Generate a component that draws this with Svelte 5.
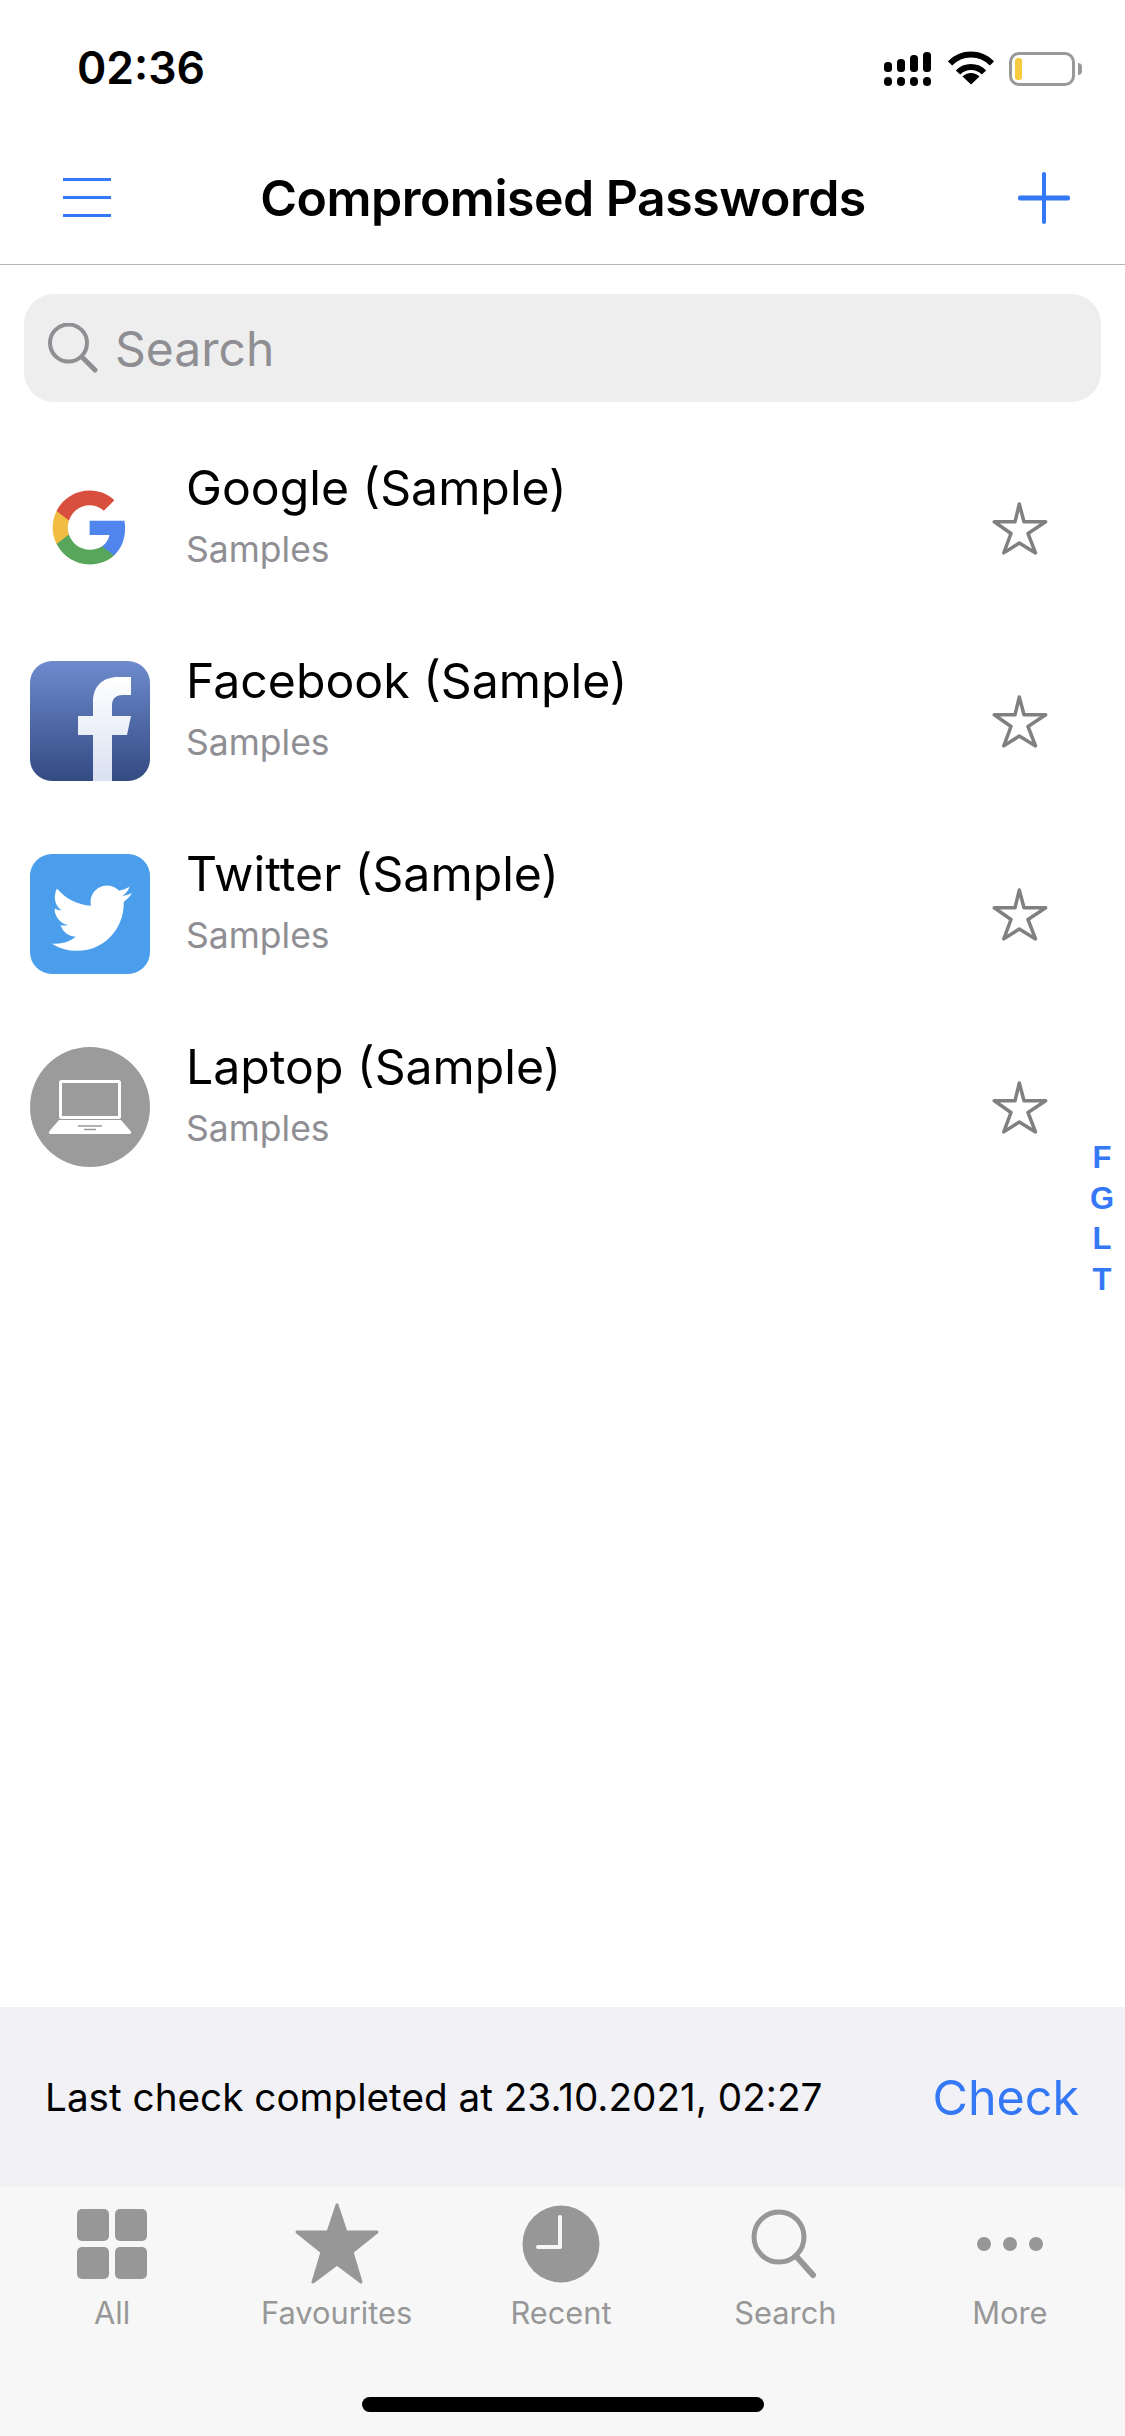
<script>
  const items = [
    { name: 'Google (Sample)', icon: 'google' },
    { name: 'Facebook (Sample)', icon: 'facebook' },
    { name: 'Twitter (Sample)', icon: 'twitter' },
    { name: 'Laptop (Sample)', icon: 'laptop' }
  ];
  const tabs = ['All', 'Favourites', 'Recent', 'Search', 'More'];
  const letters = ['F', 'G', 'L', 'T'];
</script>

<div class="page">
  <div class="status">
    <span class="time">02:36</span>
    <div class="status-icons">
      <svg class="signal" width="47" height="34" viewBox="0 0 47 34" fill="#000">
        <rect x="0" y="10" width="8" height="10" rx="3.5" />
        <rect x="13" y="7" width="8" height="13" rx="3.5" />
        <rect x="26" y="3" width="8" height="17" rx="3.5" />
        <rect x="39" y="0" width="8" height="20" rx="3.5" />
        <rect x="0" y="25" width="8" height="9" rx="4" />
        <rect x="13" y="25" width="8" height="9" rx="4" />
        <rect x="26" y="25" width="8" height="9" rx="4" />
        <rect x="39" y="25" width="8" height="9" rx="4" />
      </svg>
      <svg class="wifi" width="46" height="34" viewBox="0 0 46 34" fill="none" stroke="#000" stroke-width="6">
        <path d="M2 12.5 A29 29 0 0 1 44 12.5" />
        <path d="M10 21.5 A18 18 0 0 1 36 21.5" />
        <path d="M23 33.5 L14.5 25.5 A12 12 0 0 1 31.5 25.5 Z" fill="#000" stroke="none" />
      </svg>
      <div class="battery">
        <div class="battery-body"><div class="battery-fill"></div></div>
        <div class="battery-cap"></div>
      </div>
    </div>
  </div>

  <div class="nav">
    <svg class="menu" width="48" height="40" viewBox="0 0 48 40" fill="#3478f6">
      <rect x="0" y="0" width="48" height="3" />
      <rect x="0" y="18" width="48" height="3" />
      <rect x="0" y="36" width="48" height="3" />
    </svg>
    <span class="title">Compromised Passwords</span>
    <svg class="plus" width="52" height="52" viewBox="0 0 52 52" fill="#3478f6">
      <rect x="24" y="0" width="4" height="52" rx="2" />
      <rect x="0" y="23.5" width="52" height="5" rx="2" />
    </svg>
  </div>

  <div class="search-wrap">
    <div class="search">
      <svg width="50" height="50" viewBox="0 0 50 50" fill="none" stroke="#8e8e93" stroke-width="4" stroke-linecap="round">
        <circle cx="20.5" cy="20" r="18.5" />
        <path d="M34 34 L47 47" stroke-width="5" />
      </svg>
      <span>Search</span>
    </div>
  </div>

  <div class="list">
    {#each items as item}
      <div class="row">
        <div class="icon">
          {#if item.icon === 'google'}
            <svg width="120" height="120" viewBox="0 0 120 120">
              <g transform="translate(19.3 19.2) scale(1.68)">
                <path fill="#5085ed" d="M45.12 24.5c0-1.56-.14-3.06-.4-4.5H24v8.51h11.84c-.51 2.75-2.06 5.08-4.39 6.64v5.52h7.11c4.16-3.83 6.56-9.47 6.56-16.17z" />
                <path fill="#58a65c" d="M24 46c5.94 0 10.92-1.97 14.56-5.33l-7.11-5.52c-1.97 1.32-4.49 2.1-7.45 2.1-5.73 0-10.58-3.87-12.31-9.07H4.34v5.7C7.96 41.07 15.4 46 24 46z" />
                <path fill="#f1bc42" d="M11.69 28.18C11.25 26.86 11 25.45 11 24s.25-2.86.69-4.18v-5.7H4.34C2.85 17.09 2 20.45 2 24c0 3.55.85 6.91 2.34 9.88l7.35-5.7z" />
                <path fill="#d94f3d" d="M24 10.75c3.23 0 6.13 1.11 8.41 3.29l6.31-6.31C34.91 4.18 29.93 2 24 2 15.4 2 7.96 6.93 4.34 14.12l7.35 5.7c1.73-5.2 6.58-9.07 12.31-9.07z" />
              </g>
            </svg>
          {:else if item.icon === 'facebook'}
            <svg width="120" height="120" viewBox="0 0 120 120">
              <defs>
                <linearGradient id="fbBg" x1="0" y1="0" x2="0" y2="1">
                  <stop offset="0" stop-color="#6d8bcd" />
                  <stop offset="1" stop-color="#344a83" />
                </linearGradient>
                <linearGradient id="fbF" x1="0" y1="0" x2="0" y2="1">
                  <stop offset="0" stop-color="#ffffff" />
                  <stop offset="1" stop-color="#d9e0f1" />
                </linearGradient>
              </defs>
              <rect width="120" height="120" rx="22" fill="url(#fbBg)" />
              <path fill="url(#fbF)" d="M63 120V74H48V55H63V41C63 25 73 16 88 16H101V34H93C85 34 82 38 82 45V55H101L97 74H82V120Z" />
            </svg>
          {:else if item.icon === 'twitter'}
            <svg width="120" height="120" viewBox="0 0 120 120">
              <rect width="120" height="120" rx="22" fill="#4b9eec" />
              <path transform="translate(21.5 24) scale(3.35)" fill="#fff" d="M23.953 4.57a10 10 0 01-2.825.775 4.958 4.958 0 002.163-2.723c-.951.555-2.005.959-3.127 1.184a4.92 4.92 0 00-8.384 4.482C7.69 8.095 4.067 6.13 1.64 3.162a4.822 4.822 0 00-.666 2.475c0 1.71.87 3.213 2.188 4.096a4.904 4.904 0 01-2.228-.616v.06a4.923 4.923 0 003.946 4.827 4.996 4.996 0 01-2.212.085 4.936 4.936 0 004.604 3.417 9.867 9.867 0 01-6.102 2.105c-.39 0-.779-.023-1.17-.067a13.995 13.995 0 007.557 2.209c9.053 0 13.998-7.496 13.998-13.985 0-.21 0-.42-.015-.63A9.935 9.935 0 0024 4.59z" />
            </svg>
          {:else}
            <svg width="120" height="120" viewBox="0 0 120 120">
              <circle cx="60" cy="60" r="60" fill="#9b9b9b" />
              <rect x="30.5" y="34.5" width="59" height="36" rx="1" fill="none" stroke="#fff" stroke-width="3" />
              <path fill="#fff" d="M29 73H91L100.500 84C102 86 101 87 99 87H21C19 87 18 86 19.500 84Z" />
              <path stroke="#9b9b9b" stroke-width="1.500" d="M48 79H72M54 82.500H66" />
            </svg>
          {/if}
        </div>
        <div class="text">
          <div class="name">{item.name}</div>
          <div class="group">Samples</div>
        </div>
        <svg class="star" width="60" height="60" viewBox="0 0 60 60" fill="none" stroke="#808080" stroke-width="3.500" stroke-linejoin="round">
          <path d="M29.300 4L34 21.800H55.700L38 33.500L45.500 52.900L29.300 43L13.800 52.900L21 33.500L4.300 21.800H25Z" />
        </svg>
      </div>
    {/each}
  </div>

  <div class="index">
    {#each letters as letter}
      <span>{letter}</span>
    {/each}
  </div>

  <div class="check-bar">
    <span class="check-text">Last check completed at 23.10.2021, 02:27</span>
    <span class="check-btn">Check</span>
  </div>

  <div class="tabbar">
    <div class="tabs">
      {#each tabs as tab}
        <div class="tab">
          <div class="tab-icon">
            {#if tab === 'All'}
              <svg width="70" height="70" viewBox="0 0 70 70" fill="#979797">
                <rect x="0" y="0" width="32" height="32" rx="5" />
                <rect x="38" y="0" width="32" height="32" rx="5" />
                <rect x="0" y="38" width="32" height="32" rx="5" />
                <rect x="38" y="38" width="32" height="32" rx="5" />
              </svg>
            {:else if tab === 'Favourites'}
              <svg width="86" height="82" viewBox="0 0 86 82" fill="#979797" stroke="#979797" stroke-width="3" stroke-linejoin="round">
                <path d="M43 2L52 29H83L58 49L67 79L43 61L19 79L28 49L3 29H34Z" />
              </svg>
            {:else if tab === 'Recent'}
              <svg width="78" height="78" viewBox="0 0 78 78">
                <circle cx="39" cy="39" r="38.500" fill="#979797" />
                <path d="M38 12V42H16" fill="none" stroke="#f7f7f7" stroke-width="4" stroke-linecap="round" stroke-linejoin="round" />
              </svg>
            {:else if tab === 'Search'}
              <svg width="68" height="70" viewBox="0 0 68 70" fill="none" stroke="#979797" stroke-width="5" stroke-linecap="round">
                <circle cx="28" cy="28" r="25" />
                <path d="M45 47L62 66" stroke-width="6" />
              </svg>
            {:else}
              <svg width="66" height="16" viewBox="0 0 66 16" fill="#979797">
                <circle cx="7" cy="8" r="7" />
                <circle cx="33" cy="8" r="7" />
                <circle cx="59" cy="8" r="7" />
              </svg>
            {/if}
          </div>
          <span class="tab-label">{tab}</span>
        </div>
      {/each}
    </div>
    <div class="home-indicator"></div>
  </div>
</div>

<style>
  :global(body) {
    margin: 0;
    background: #fff;
  }

  .page {
    position: relative;
    width: 1125px;
    height: 2436px;
    display: flex;
    flex-direction: column;
    overflow: hidden;
    font-family: Inter, "Liberation Sans", sans-serif;
    color: #000;
  }

  .status {
    height: 132px;
    box-sizing: border-box;
    display: flex;
    align-items: flex-start;
    justify-content: space-between;
    padding: 40px 43px 0 77px;
  }

  .time {
    font-size: 44.500px;
    line-height: 56px;
    font-weight: 600;
  }

  .status-icons {
    display: flex;
    align-items: flex-start;
    padding-top: 12px;
  }

  .wifi {
    margin-left: 17px;
    margin-top: -1px;
  }

  .battery {
    display: flex;
    align-items: center;
    margin-left: 15px;
    height: 34px;
  }

  .battery-body {
    width: 66px;
    height: 34px;
    box-sizing: border-box;
    border: 3px solid #999;
    border-radius: 10px;
    padding: 3px;
  }

  .battery-fill {
    width: 7px;
    height: 100%;
    border-radius: 3px;
    background: #f6cb3f;
  }

  .battery-cap {
    width: 4px;
    height: 12px;
    margin-left: 3px;
    background: #999;
    border-radius: 0 6px 6px 0;
  }

  .nav {
    height: 133px;
    box-sizing: border-box;
    display: flex;
    align-items: center;
    justify-content: space-between;
    padding: 0 55px 0 63px;
    border-bottom: 1.5px solid #b4b4b4;
  }

  .title {
    margin-right: 3px;
    font-size: 50px;
    font-weight: 600;
    letter-spacing: -0.5px;
  }

  .search-wrap {
    padding: 29px 24px;
  }

  .search {
    height: 108px;
    box-sizing: border-box;
    display: flex;
    align-items: center;
    gap: 17px;
    padding-left: 24px;
    background: #eee;
    border-radius: 30px;
    font-size: 48px;
    color: #8e8e93;
  }

  .list {
    flex: 1;
  }

  .row {
    height: 193px;
    display: flex;
    align-items: center;
    padding-left: 30px;
    padding-right: 75px;
  }

  .icon {
    width: 120px;
    height: 120px;
  }

  .icon svg {
    display: block;
  }

  .star {
    display: block;
    margin-top: 4px;
  }

  .text {
    flex: 1;
    margin-left: 36px;
    margin-top: -26px;
  }

  .name {
    font-size: 48.200px;
    line-height: 62px;
  }

  .group {
    margin-top: 8px;
    font-size: 35.500px;
    line-height: 46px;
    color: #8e8e93;
  }

  .index {
    position: absolute;
    top: 1138px;
    right: 0;
    width: 46px;
    display: flex;
    flex-direction: column;
    align-items: center;
    font-family: "Liberation Sans", sans-serif;
    font-size: 31px;
    font-weight: 700;
    line-height: 40.6px;
    color: #3478f6;
  }

  .check-bar {
    height: 180px;
    display: flex;
    align-items: center;
    justify-content: space-between;
    padding: 0 46px 0 45px;
    background: #f1f1f6;
  }

  .check-text {
    font-size: 38.700px;
  }

  .check-btn {
    font-size: 48.400px;
    color: #3478f6;
  }

  .tabbar {
    height: 249px;
    background: #f7f7f7;
    display: flex;
    flex-direction: column;
    align-items: center;
  }

  .tabs {
    width: 100%;
    box-sizing: border-box;
    padding-right: 3px;
    display: grid;
    grid-template-columns: repeat(5, 1fr);
  }

  .tab {
    display: flex;
    flex-direction: column;
    align-items: center;
  }

  .tab-icon {
    height: 100px;
    margin-top: 7px;
    display: flex;
    align-items: center;
    justify-content: center;
  }

  .tab-label {
    margin-top: -1px;
    font-size: 30.800px;
    line-height: 40px;
    color: #979797;
  }

  .home-indicator {
    width: 402px;
    height: 15px;
    margin-top: 64px;
    border-radius: 8px;
    background: #000;
  }
</style>
